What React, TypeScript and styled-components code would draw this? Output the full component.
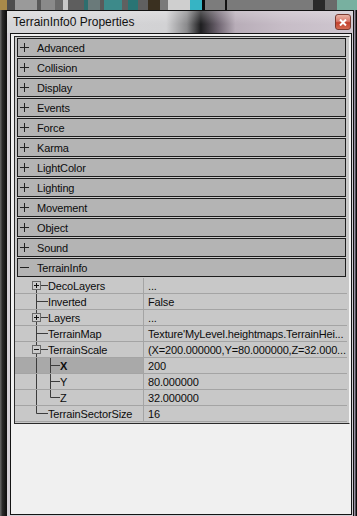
import styled, { createGlobalStyle } from 'styled-components'

const GlobalStyle = createGlobalStyle`
  html, body {
    margin: 0;
    padding: 0;
    background: #1c1c1c;
  }
  * {
    box-sizing: border-box;
  }
`

const Screen = styled.div`
  width: 357px;
  height: 516px;
  overflow: hidden;
  display: flex;
  flex-direction: column;
  background: #1c1c1c;
  font-family: "Liberation Sans", Arial, sans-serif;
`

const TopStrip = styled.div`
  height: 10px;
  display: flex;
  flex-shrink: 0;
`

const StripChip = styled.span<{ $w: number; $c: string }>`
  width: ${p => p.$w}px;
  height: 100%;
  background: ${p => p.$c};
`

const Desk = styled.div`
  flex: 1;
  display: flex;
  min-height: 0;
`

const LeftEdge = styled.div`
  width: 6px;
  background: linear-gradient(to right, #6a6a6a 0%, #2a2a2a 40%, #111 100%);
`

const RightEdge = styled.div`
  flex: 1;
  background: linear-gradient(to right, #9890a2 0%, #9890a2 40%, #0c0c0c 60%);
`

const Window = styled.div`
  width: 348px;
  display: flex;
  flex-direction: column;
  border: 1px solid #111;
  border-bottom: none;
  background: #d3cfd6;
`

const TitleBar = styled.div`
  height: 22px;
  display: flex;
  align-items: center;
  padding: 0 2px 0 6px;
  background:
    linear-gradient(to bottom, rgba(255, 255, 255, 0.25), rgba(255, 255, 255, 0) 60%),
    linear-gradient(to right, #d6d6d8 0%, #d2d2d4 46%, #8a8a8c 52%, #1e1e20 56%, #6e6470 61%, #b8adb8 66%, #c7bdc7 80%, #cec6cf 100%);
`

const Title = styled.span`
  flex: 1;
  font-family: "Liberation Sans", Arial, sans-serif;
  font-size: 12px;
  color: #111;
`

const CloseButton = styled.div`
  width: 16px;
  height: 16px;
  border: 1px solid #7a3a30;
  border-radius: 3px;
  display: flex;
  align-items: center;
  justify-content: center;
  background: linear-gradient(to bottom, #eab4a6 0%, #d8786a 45%, #c2402c 55%, #d46a52 100%);
`

const Body = styled.div`
  flex: 1;
  display: flex;
  padding: 0 1px 0 3px;
  min-height: 0;
`

const Panel = styled.div`
  flex: 1;
  border: 1px solid #141414;
  background: #f0f0f0;
  padding: 2px 1px 0 3px;
  height: 482px;
`

const Grid = styled.div`
  border: 1px solid #2a2a2a;
  border-right-color: #f4f4f4;
  background: #c8c8c8;
  padding: 1px 0;
`

const Category = styled.div`
  height: 19px;
  margin: 0 3px 1px 2px;
  border: 1px solid #1c1c1c;
  background: #b4b4b4;
  display: flex;
  align-items: center;
  padding-left: 2px;
  font-size: 11px;
  letter-spacing: -0.15px;
  color: #0c0c0c;
`

const Expander = styled.svg`
  width: 9px;
  height: 9px;
  margin-right: 8px;
  flex-shrink: 0;
`

const PropRow = styled.div`
  height: 16px;
  display: grid;
  grid-template-columns: 128px 1fr;
  border-bottom: 1px solid #a4a4a4;
  margin-right: 2px;
  font-size: 11px;
  letter-spacing: -0.15px;
  color: #0c0c0c;
`

const NameCell = styled.div<{ $selected?: boolean }>`
  display: flex;
  align-items: center;
  background: ${p => (p.$selected ? '#a9a9a9' : 'transparent')};
  overflow: hidden;
  white-space: nowrap;
`

const TreeLines = styled.svg`
  height: 15px;
  flex-shrink: 0;
  overflow: visible;
  display: block;
`

const NameLabel = styled.span<{ $bold?: boolean }>`
  font-weight: ${p => (p.$bold ? 700 : 400)};
`

const ValueCell = styled.div`
  display: flex;
  align-items: center;
  border-left: 1px solid #a4a4a4;
  padding-left: 4px;
  overflow: hidden;
  white-space: nowrap;
`

const strip: [number, string][] = [
  [7, '#a88a4a'], [8, '#4e4e4e'], [22, '#9a9a9a'], [4, '#5a5a5a'], [14, '#8a8a8a'],
  [8, '#6a6a6a'], [5, '#c8c8c8'], [16, '#5e5e5e'], [4, '#2e6e6e'], [12, '#6a7a7a'],
  [4, '#5a5a5a'], [18, '#3d8a8a'], [6, '#606060'], [10, '#2a7474'], [10, '#606060'],
  [12, '#3a3020'], [8, '#7a7a7a'], [22, '#cfcfcf'], [12, '#36b4c4'], [3, '#0a0a0a'],
  [20, '#7c7c7c'], [2, '#111111'], [86, '#7a7a7a'], [12, '#2a2a2a'], [12, '#6a6a6a'],
  [20, '#78b0a0'],
]

const categories = [
  'Advanced', 'Collision', 'Display', 'Events', 'Force', 'Karma',
  'LightColor', 'Lighting', 'Movement', 'Object', 'Sound',
]

interface Prop {
  name: string
  value: string
  level: 1 | 2
  box?: 'plus' | 'minus'
  first?: boolean
  last?: boolean
  lastChild?: boolean
  selected?: boolean
}

const props: Prop[] = [
  { name: 'DecoLayers', value: '...', level: 1, box: 'plus', first: true },
  { name: 'Inverted', value: 'False', level: 1 },
  { name: 'Layers', value: '...', level: 1, box: 'plus' },
  { name: 'TerrainMap', value: "Texture'MyLevel.heightmaps.TerrainHei...", level: 1 },
  { name: 'TerrainScale', value: '(X=200.000000,Y=80.000000,Z=32.000...', level: 1, box: 'minus' },
  { name: 'X', value: '200', level: 2, selected: true },
  { name: 'Y', value: '80.000000', level: 2 },
  { name: 'Z', value: '32.000000', level: 2, lastChild: true },
  { name: 'TerrainSectorSize', value: '16', level: 1, last: true },
]

function ExpandIcon({ open }: { open?: boolean }) {
  return (
    <Expander viewBox="0 0 9 9">
      <path d="M0 4.5H9" stroke="#222" strokeWidth="1" />
      {!open && <path d="M4.5 0V9" stroke="#222" strokeWidth="1" />}
    </Expander>
  )
}

function Tree({ p }: { p: Prop }) {
  const line = '#3c3c3c'
  const w = p.level === 1 ? 33 : 45
  return (
    <TreeLines width={w} viewBox={`0 0 ${w} 15`}>
      {p.level === 1 ? (
        <>
          <path d={`M21.5 ${p.first ? 7.5 : 0}V${p.last ? 7.5 : 16}`} stroke={line} />
          <path d="M21.5 7.5H33" stroke={line} />
        </>
      ) : (
        <>
          <path d="M21.5 0V16" stroke={line} />
          <path d={`M35.5 0V${p.lastChild ? 7.5 : 16}`} stroke={line} />
          <path d="M35.5 7.5H45" stroke={line} />
        </>
      )}
      {p.box && (
        <>
          <rect x="17.5" y="3.5" width="8" height="8" fill="#cbcbcb" stroke="#6a6a6a" />
          <path d="M19 7.5H24" stroke="#111" />
          {p.box === 'plus' && <path d="M21.5 5V10" stroke="#111" />}
        </>
      )}
    </TreeLines>
  )
}

export default function App() {
  return (
    <>
      <GlobalStyle />
      <Screen>
        <TopStrip>
          {strip.map(([w, c], i) => (
            <StripChip key={i} $w={w} $c={c} />
          ))}
        </TopStrip>
        <Desk>
          <LeftEdge />
          <Window>
            <TitleBar>
              <Title>TerrainInfo0 Properties</Title>
              <CloseButton>
                <svg width="8" height="7" viewBox="0 0 8 7">
                  <path d="M1 0.5L7 6.5M7 0.5L1 6.5" stroke="#fff" strokeWidth="2" />
                </svg>
              </CloseButton>
            </TitleBar>
            <Body>
              <Panel>
                <Grid>
                  {categories.map(c => (
                    <Category key={c}>
                      <ExpandIcon />
                      {c}
                    </Category>
                  ))}
                  <Category>
                    <ExpandIcon open />
                    TerrainInfo
                  </Category>
                  {props.map(p => (
                    <PropRow key={p.name}>
                      <NameCell $selected={p.selected}>
                        <Tree p={p} />
                        <NameLabel $bold={p.selected}>{p.name}</NameLabel>
                      </NameCell>
                      <ValueCell>{p.value}</ValueCell>
                    </PropRow>
                  ))}
                </Grid>
              </Panel>
            </Body>
          </Window>
          <RightEdge />
        </Desk>
      </Screen>
    </>
  )
}
